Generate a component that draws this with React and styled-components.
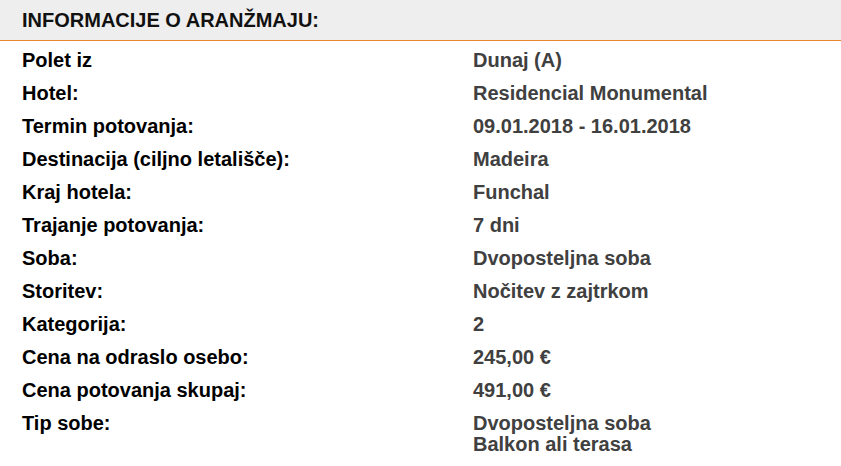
import React from 'react';
import styled, { createGlobalStyle } from 'styled-components';

const GlobalStyle = createGlobalStyle`
  body {
    margin: 0;
    background: #fff;
    font-family: "Liberation Sans", Arial, sans-serif;
  }
`;

const rows = [
  ['Polet iz', ['Dunaj (A)']],
  ['Hotel:', ['Residencial Monumental']],
  ['Termin potovanja:', ['09.01.2018 - 16.01.2018']],
  ['Destinacija (ciljno letališče):', ['Madeira']],
  ['Kraj hotela:', ['Funchal']],
  ['Trajanje potovanja:', ['7 dni']],
  ['Soba:', ['Dvoposteljna soba']],
  ['Storitev:', ['Nočitev z zajtrkom']],
  ['Kategorija:', ['2']],
  ['Cena na odraslo osebo:', ['245,00 €']],
  ['Cena potovanja skupaj:', ['491,00 €']],
  ['Tip sobe:', ['Dvoposteljna soba', 'Balkon ali terasa']],
];

//info table
function App() {
  return (
    <>
      <GlobalStyle />
      <Panel>
        <Header>INFORMACIJE O ARANŽMAJU:</Header>
        <Table>
          {rows.map(([label, values]) => (
            <Row key={label}>
              <Label>{label}</Label>
              <Value>
                {values.map(v => <div key={v}>{v}</div>)}
              </Value>
            </Row>
          ))}
        </Table>
      </Panel>
    </>
  );
}

const Panel = styled.div`
width: 841px;
`;

const Header = styled.div`
height: 41px;
box-sizing: border-box;
padding: 8px 22px 0;
background: #eeeeee;
border-bottom: 1.5px solid #e8862c;
font-size: 20px;
line-height: 24px;
font-weight: bold;
color: #111;
`;

const Table = styled.div`
display: flex;
flex-direction: column;
padding-top: 9px;
`;

const Row = styled.div`
display: grid;
grid-template-columns: 451px 1fr;
padding: 0 22px;
min-height: 33px;
font-size: 20px;
line-height: 21px;
font-weight: bold;
`;

const Label = styled.div`
color: #000;
`;

const Value = styled.div`
color: #404040;
`;

export default App;
